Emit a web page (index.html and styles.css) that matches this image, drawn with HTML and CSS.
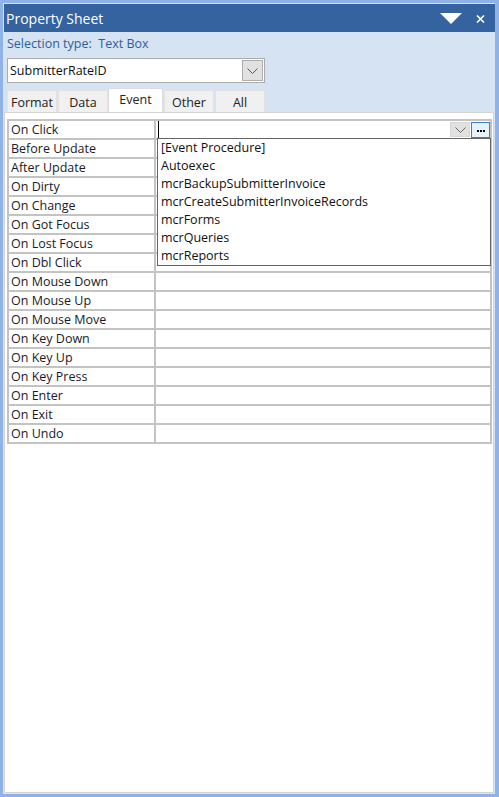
FILE: index.html
```html
<!DOCTYPE html>
<html>
<head>
<meta charset="utf-8">
<link rel="stylesheet" href="styles.css">
</head>
<body>
<div class="window">
  <div class="titlebar">
    <span class="title">Property Sheet</span>
    <span class="tb-icons">
      <svg class="tri" width="22" height="11" viewBox="0 0 22 11"><polygon points="0,0 22,0 11,11" fill="#fff"/></svg>
      <svg class="close" width="9" height="8" viewBox="0 0 9 8"><path d="M1 0.5 L8 7.5 M8 0.5 L1 7.5" stroke="#fff" stroke-width="1.6"/></svg>
    </span>
  </div>
  <div class="seltype">Selection type:&nbsp; Text Box</div>
  <div class="combo">
    <span class="combo-text">SubmitterRateID</span>
    <span class="combo-btn"><svg width="11" height="6" viewBox="0 0 11 6"><path d="M0.5 0.5 L5.5 5.5 L10.5 0.5" fill="none" stroke="#555" stroke-width="1"/></svg></span>
  </div>
  <div class="tabs">
    <div class="tab">Format</div>
    <div class="tab">Data</div>
    <div class="tab active">Event</div>
    <div class="tab">Other</div>
    <div class="tab">All</div>
  </div>
  <div class="content">
    <div class="grid">
      <div class="lbl">On Click</div>
      <div class="val focus">
        <span class="caret"></span>
        <span class="dd-btn"><svg width="11" height="6" viewBox="0 0 11 6"><path d="M0.5 0.5 L5.5 5.5 L10.5 0.5" fill="none" stroke="#666" stroke-width="1"/></svg></span>
        <span class="build-btn"><i class="dot"></i><i class="dot"></i><i class="dot"></i></span>
        <div class="droplist">
          <div class="item">[Event Procedure]</div>
          <div class="item">Autoexec</div>
          <div class="item">mcrBackupSubmitterInvoice</div>
          <div class="item">mcrCreateSubmitterInvoiceRecords</div>
          <div class="item">mcrForms</div>
          <div class="item">mcrQueries</div>
          <div class="item">mcrReports</div>
        </div>
      </div>
      <div class="lbl">Before Update</div><div class="val"></div>
      <div class="lbl">After Update</div><div class="val"></div>
      <div class="lbl">On Dirty</div><div class="val"></div>
      <div class="lbl">On Change</div><div class="val"></div>
      <div class="lbl">On Got Focus</div><div class="val"></div>
      <div class="lbl">On Lost Focus</div><div class="val"></div>
      <div class="lbl">On Dbl Click</div><div class="val"></div>
      <div class="lbl">On Mouse Down</div><div class="val"></div>
      <div class="lbl">On Mouse Up</div><div class="val"></div>
      <div class="lbl">On Mouse Move</div><div class="val"></div>
      <div class="lbl">On Key Down</div><div class="val"></div>
      <div class="lbl">On Key Up</div><div class="val"></div>
      <div class="lbl">On Key Press</div><div class="val"></div>
      <div class="lbl">On Enter</div><div class="val"></div>
      <div class="lbl">On Exit</div><div class="val"></div>
      <div class="lbl">On Undo</div><div class="val"></div>
    </div>
  </div>
</div>
</body>
</html>
```

FILE: styles.css
```css
html, body {
  margin: 0;
  padding: 0;
  background: #8fb3e7;
  height: 797px;
  overflow: hidden;
  font-family: "Open Sans", "Noto Sans", sans-serif;
}
.window {
  margin: 3px 4px 3px 3px;
  height: 791px;
  background: #d5e3f3;
  display: flex;
  flex-direction: column;
  box-sizing: border-box;
  padding: 1px 0 1px 1px;
}
.titlebar {
  height: 28px;
  background: #3563a0;
  color: #fff;
  display: flex;
  align-items: center;
  justify-content: space-between;
  padding-left: 2px;
  flex: none;
}
.title {
  font-size: 14px;
}
.tb-icons {
  display: flex;
  align-items: center;
  gap: 14px;
  padding-right: 10px;
}
.tri { display: block; margin-top: 1px; }
.close { display: block; margin-top: 1px; }
.seltype {
  color: #2f5d9c;
  font-size: 12.5px;
  height: 22px;
  line-height: 22px;
  padding-left: 3px;
  padding-top: 1px;
  flex: none;
}
.combo {
  margin: 3px 0 0 3px;
  width: 258px;
  height: 25px;
  box-sizing: border-box;
  border: 1px solid #acacac;
  background: #fff;
  display: flex;
  align-items: center;
  justify-content: space-between;
  flex: none;
}
.combo-text {
  font-size: 12.5px;
  color: #111;
  padding-left: 2px;
}
.combo-btn {
  width: 21px;
  height: 21px;
  margin-right: 1px;
  box-sizing: border-box;
  border: 1px solid #adadad;
  background: #e1e1e1;
  display: flex;
  align-items: center;
  justify-content: center;
}
.tabs {
  display: flex;
  margin: 5px 0 0 3px;
  height: 24px;
  align-items: flex-end;
  flex: none;
}
.tab {
  height: 22px;
  box-sizing: border-box;
  width: 50px;
  background: #f0f0f0;
  border: 1px solid #e2e2e2;
  border-bottom: none;
  margin-right: 1px;
  font-size: 12.5px;
  color: #222;
  text-align: center;
  line-height: 23px;
}
.tab.active {
  height: 24px;
  width: 55px;
  margin-left: -1px;
  background: #fff;
  border-color: #dcdcdc;
  line-height: 22px;
}
.content {
  flex: 1;
  background: #fff;
  border: 1px solid #d4d4d4;
  margin-right: 1px;
  padding: 6px 1px 0 2px;
}
.grid {
  display: grid;
  grid-template-columns: 145px 1fr;
  grid-auto-rows: 17px;
  gap: 2px;
  padding: 2px;
  background: #c3c3c3;
  position: relative;
}
.lbl {
  background: #fff;
  font-size: 12.5px;
  color: #1a1a2a;
  line-height: 17px;
  padding-left: 2px;
  white-space: nowrap;
  overflow: hidden;
}
.val {
  background: #fff;
}
.val.focus {
  position: relative;
  display: flex;
  align-items: center;
  justify-content: flex-end;
}
.caret {
  position: absolute;
  left: 2px;
  top: 0;
  width: 1px;
  height: 17px;
  background: #000;
}
.dd-btn {
  width: 20px;
  height: 15px;
  background: #e1e1e1;
  border: 1px solid #d6d6d6;
  box-sizing: border-box;
  display: flex;
  align-items: center;
  justify-content: center;
  margin-right: 1px;
}
.build-btn {
  width: 19px;
  height: 16px;
  background: #e5f1fb;
  border: 1px solid #3c7fc1;
  box-sizing: border-box;
  display: flex;
  align-items: center;
  justify-content: center;
  gap: 1px;
  padding-top: 2px;
}
.dot {
  display: block;
  width: 2px;
  height: 2px;
  background: #000;
}
.droplist {
  position: absolute;
  left: 1px;
  top: 17px;
  right: -1px;
  height: 128px;
  box-sizing: border-box;
  border: 1px solid #646464;
  background: #fff;
  z-index: 2;
}
.item {
  height: 18px;
  line-height: 18px;
  padding-left: 3px;
  font-size: 12.5px;
  color: #111;
  white-space: nowrap;
}
```
